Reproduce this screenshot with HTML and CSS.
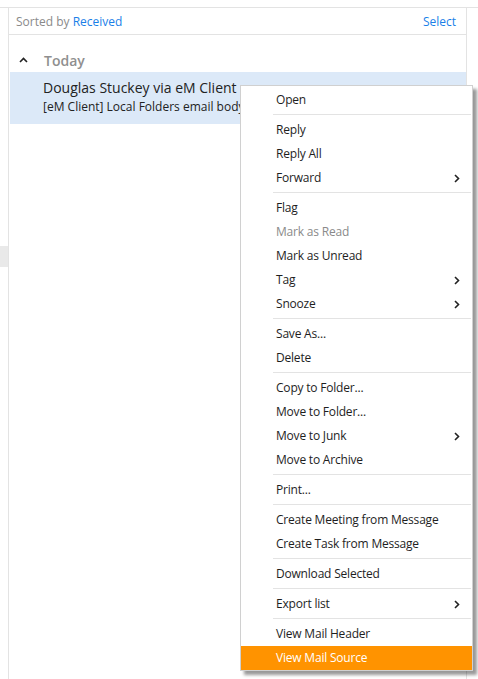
FILE: index.html
```html
<!DOCTYPE html>
<html>
<head>
<meta charset="utf-8">
<link rel="stylesheet" href="styles.css">
</head>
<body>
<div class="app">
  <div class="sidebar"><div class="side-item"></div></div>
  <div class="list">
    <div class="list-header">
      <span class="sorted">Sorted by <span class="link">Received</span></span>
      <span class="link">Select</span>
    </div>
    <div class="group">
      <svg class="caret" width="9" height="6" viewBox="0 0 9 6"><path d="M1 5 L4.5 1.5 L8 5" fill="none" stroke="#222" stroke-width="1.6"/></svg>
      <span class="group-title">Today</span>
    </div>
    <div class="mail selected">
      <div class="mail-from">Douglas Stuckey via eM Client</div>
      <div class="mail-subject">[eM Client] Local Folders email body not showing</div>
    </div>
  </div>
  <div class="right-gap"></div>
</div>

<div class="menu">
  <div class="item">Open</div>
  <div class="sep"></div>
  <div class="item">Reply</div>
  <div class="item">Reply All</div>
  <div class="item sub">Forward<svg class="chev" width="6" height="9" viewBox="0 0 6 9"><path d="M1 1 L4.5 4.5 L1 8" fill="none" stroke="#222" stroke-width="1.6"/></svg></div>
  <div class="sep"></div>
  <div class="item">Flag</div>
  <div class="item disabled">Mark as Read</div>
  <div class="item">Mark as Unread</div>
  <div class="item sub">Tag<svg class="chev" width="6" height="9" viewBox="0 0 6 9"><path d="M1 1 L4.5 4.5 L1 8" fill="none" stroke="#222" stroke-width="1.6"/></svg></div>
  <div class="item sub">Snooze<svg class="chev" width="6" height="9" viewBox="0 0 6 9"><path d="M1 1 L4.5 4.5 L1 8" fill="none" stroke="#222" stroke-width="1.6"/></svg></div>
  <div class="sep"></div>
  <div class="item">Save As...</div>
  <div class="item">Delete</div>
  <div class="sep"></div>
  <div class="item">Copy to Folder...</div>
  <div class="item">Move to Folder...</div>
  <div class="item sub">Move to Junk<svg class="chev" width="6" height="9" viewBox="0 0 6 9"><path d="M1 1 L4.5 4.5 L1 8" fill="none" stroke="#222" stroke-width="1.6"/></svg></div>
  <div class="item">Move to Archive</div>
  <div class="sep"></div>
  <div class="item">Print...</div>
  <div class="sep"></div>
  <div class="item">Create Meeting from Message</div>
  <div class="item">Create Task from Message</div>
  <div class="sep"></div>
  <div class="item">Download Selected</div>
  <div class="sep"></div>
  <div class="item sub">Export list<svg class="chev" width="6" height="9" viewBox="0 0 6 9"><path d="M1 1 L4.5 4.5 L1 8" fill="none" stroke="#222" stroke-width="1.6"/></svg></div>
  <div class="sep"></div>
  <div class="item">View Mail Header</div>
  <div class="item active">View Mail Source</div>
</div>
</body>
</html>
```

FILE: styles.css
```css
html, body {
  margin: 0;
  padding: 0;
  background: #ffffff;
  font-family: "Open Sans", "Noto Sans", sans-serif;
  color: #1e1e1e;
}

.app {
  margin-top: 7px;
  border-top: 1px solid #e3e3e3;
  height: 671px;
  display: flex;
}

.sidebar {
  width: 8px;
  border-right: 1px solid #e3e3e3;
  padding-top: 238px;
}

.side-item {
  height: 21px;
  background: #e9e9e9;
}

.list {
  width: 457px;
  border-right: 1px solid #e3e3e3;
  overflow: hidden;
}

.right-gap {
  flex: 1;
}

.list-header {
  height: 27px;
  border-bottom: 1px solid #e3e3e3;
  display: flex;
  align-items: center;
  justify-content: space-between;
  padding: 1px 10px 0 7px;
  box-sizing: border-box;
  font-size: 12px;
}

.sorted {
  color: #8a8a8a;
}

.link {
  color: #1a7fe8;
}

.group {
  height: 37px;
  display: flex;
  align-items: flex-end;
  padding-bottom: 2px;
  box-sizing: border-box;
  padding-left: 10px;
}

.caret {
  margin-right: 16px;
  margin-bottom: 7px;
}

.group-title {
  font-size: 14px;
  line-height: 19px;
  font-weight: 600;
  color: #8f8f8f;
}

.mail {
  margin-left: 1px;
  height: 52px;
  box-sizing: border-box;
  padding: 6px 0 0 33px;
  white-space: nowrap;
}

.selected {
  background: #dce9f8;
}

.mail-from {
  width: fit-content;
  font-size: 14px;
  line-height: 19px;
  color: #222;
}

.mail-subject {
  font-size: 12px;
  line-height: 19px;
  color: #222;
  width: 198px;
  overflow: hidden;
}

.menu {
  position: absolute;
  left: 240px;
  top: 85px;
  width: 231px;
  background: #ffffff;
  border: 1px solid #d0d0d0;
  padding: 2px 0 0 0;
  box-shadow: 4px 4px 3px rgba(0, 0, 0, 0.4);
  font-size: 12px;
  letter-spacing: -0.2px;
}

.item {
  height: 24px;
  line-height: 24px;
  padding-left: 35px;
  padding-right: 12px;
  display: flex;
  align-items: center;
  justify-content: space-between;
  color: #1e1e1e;
  white-space: nowrap;
}

.item.disabled {
  color: #8a8a8a;
}

.item.active {
  background: #ff9300;
  color: #ffffff;
}

.chev {
  display: block;
}

.sep {
  height: 6px;
  margin-left: 32px;
  margin-right: 1px;
  box-sizing: border-box;
  border-top: 2px solid #ffffff;
  border-bottom: 3px solid #ffffff;
  background: #e3e3e3;
}
```
